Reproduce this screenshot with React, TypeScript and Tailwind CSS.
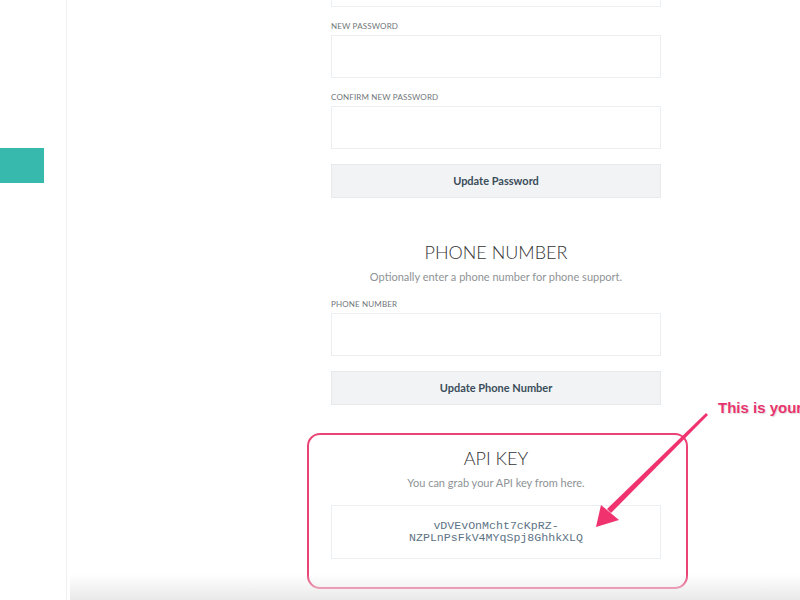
import React from 'react'

const sans = { fontFamily: "Lato, 'Open Sans', sans-serif" }

function Field({ label }: { label: string }) {
  return (
    <div className="flex flex-col">
      <label className="text-[8px] leading-[10px] uppercase tracking-[0.02em] text-[#6f7679] mb-[4px]">{label}</label>
      <div className="h-[43px] border border-[#eceff1] bg-white" />
    </div>
  )
}

function Button({ children }: { children: React.ReactNode }) {
  return (
    <button className="h-[34px] w-full bg-[#f1f3f5] border border-[#e6eaed] text-[11px] font-bold text-[#3b4d5a]">
      {children}
    </button>
  )
}

export default function App() {
  return (
    <div className="relative w-[800px] h-[600px] overflow-hidden bg-white flex" style={sans}>
      {/* Sidebar */}
      <aside className="w-[67px] shrink-0 border-r border-[#f0f0f0]">
        <div className="mt-[148px] w-[44px] h-[35px] bg-[#37b9ad]" />
      </aside>

      {/* Content */}
      <main className="flex-1">
        <div className="ml-[264px] w-[330px] flex flex-col">
          {/* bottom of current password input */}
          <div className="h-[7px] border border-t-0 border-[#eceff1]" />

          <div className="mt-[14px]">
            <Field label="New Password" />
          </div>
          <div className="mt-[14px]">
            <Field label="Confirm New Password" />
          </div>
          <div className="mt-[15px]">
            <Button>Update Password</Button>
          </div>

          <h2 className="mt-[43px] text-center text-[18px] leading-[22px] font-light text-[#333]">PHONE NUMBER</h2>
          <p className="mt-[7px] text-center text-[11px] leading-[14px] text-[#8e9396]">
            Optionally enter a phone number for phone support.
          </p>
          <div className="mt-[15px]">
            <Field label="Phone Number" />
          </div>
          <div className="mt-[15px]">
            <Button>Update Phone Number</Button>
          </div>

          {/* API key, highlighted */}
          <div className="mt-[28px] -ml-[24px] w-[381px] h-[156px] border-2 border-[#ea4476] rounded-[13px] pl-[22px] flex flex-col">
            <h2 className="mt-[12px] w-[330px] text-center text-[18px] leading-[22px] font-light text-[#333]">API KEY</h2>
            <p className="mt-[7px] w-[330px] text-center text-[11px] leading-[14px] text-[#8e9396]">
              You can grab your API key from here.
            </p>
            <div
              className="mt-[15px] w-[330px] h-[54px] border border-[#eceff1] flex flex-col items-center justify-center text-[11.6px] leading-[12px] text-[#5d7385]"
              style={{ fontFamily: "'Liberation Mono', 'DejaVu Sans Mono', monospace" }}
            >
              <span>vDVEvOnMcht7cKpRZ-</span>
              <span>NZPLnPsFkV4MYqSpj8GhhkXLQ</span>
            </div>
          </div>
        </div>
      </main>

      {/* annotation arrow */}
      <svg className="absolute left-0 top-0 pointer-events-none" width="800" height="600">
        <path d="M706 413 L708 415 L611 513 L607 509 Z" fill="#f0336f" />
        <path d="M596 527 L601 505 L619 520 Z" fill="#f0336f" />
      </svg>
      <div
        className="absolute left-[718px] top-[397px] whitespace-nowrap text-[15px] font-bold text-[#e8346e]"
        style={{ fontFamily: "'Liberation Sans', Arial, sans-serif", textShadow: '1px 1px 1px rgba(0,0,0,0.15)' }}
      >
        This is your API key
      </div>

      {/* bottom shade */}
      <div className="absolute left-[70px] right-0 bottom-0 h-[26px] bg-gradient-to-b from-transparent to-[#e9e9e9] pointer-events-none" />
    </div>
  )
}
